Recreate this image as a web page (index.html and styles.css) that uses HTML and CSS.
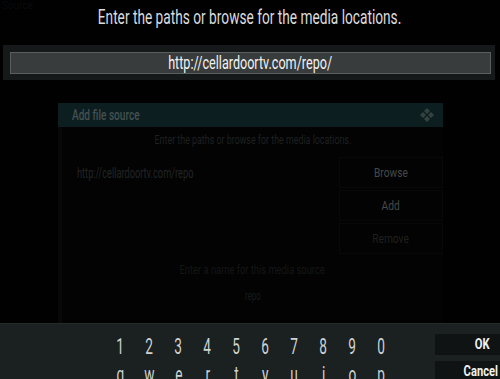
FILE: index.html
```html
<!DOCTYPE html>
<html>
<head>
<meta charset="utf-8">
<link rel="stylesheet" href="styles.css">
</head>
<body>
<div class="screen">
  <div class="ghost-tl">Source</div>
  <div class="title"><span class="nar">Enter the paths or browse for the media locations.</span></div>
  <div class="urlbar">
    <div class="urlfield"><span class="nar">http://cellardoortv.com/repo/</span></div>
  </div>
  <div class="dialog">
    <div class="dhead">
      <span class="dtitle nar-l">Add file source</span>
      <svg class="logo" width="16" height="16" viewBox="0 0 16 16">
        <path d="M8 1 L11 4 L8 7 L5 4 Z" fill="#34423f"/>
        <path d="M1 8 L4 5 L7 8 L4 11 Z" fill="#34423f"/>
        <path d="M9 8 L12 5 L15 8 L12 11 Z" fill="#34423f"/>
        <path d="M8 9 L11 12 L8 15 L5 12 Z" fill="#34423f"/>
      </svg>
    </div>
    <div class="dbody">
      <div class="dsub"><span class="nar">Enter the paths or browse for the media locations.</span></div>
      <div class="drow">
        <div class="dpath"><span class="nar-l">http://cellardoortv.com/repo</span></div>
        <div class="dbtns">
          <div class="dbtn"><span class="nar">Browse</span></div>
          <div class="dbtn"><span class="nar">Add</span></div>
          <div class="dbtn dim"><span class="nar">Remove</span></div>
        </div>
      </div>
      <div class="dname"><span class="nar">Enter a name for this media source</span></div>
      <div class="dval"><span class="nar">repo</span></div>
    </div>
  </div>
  <div class="keyboard">
    <div class="keys">
      <div class="krow">
        <div class="key"><span class="nar">1</span></div>
        <div class="key"><span class="nar">2</span></div>
        <div class="key"><span class="nar">3</span></div>
        <div class="key"><span class="nar">4</span></div>
        <div class="key"><span class="nar">5</span></div>
        <div class="key"><span class="nar">6</span></div>
        <div class="key"><span class="nar">7</span></div>
        <div class="key"><span class="nar">8</span></div>
        <div class="key"><span class="nar">9</span></div>
        <div class="key"><span class="nar">0</span></div>
      </div>
      <div class="krow">
        <div class="key"><span class="nar">q</span></div>
        <div class="key"><span class="nar">w</span></div>
        <div class="key"><span class="nar">e</span></div>
        <div class="key"><span class="nar">r</span></div>
        <div class="key"><span class="nar">t</span></div>
        <div class="key"><span class="nar">y</span></div>
        <div class="key"><span class="nar">u</span></div>
        <div class="key"><span class="nar">i</span></div>
        <div class="key"><span class="nar">o</span></div>
        <div class="key"><span class="nar">p</span></div>
      </div>
    </div>
    <div class="side">
      <div class="sbtn"><span class="nar-r">OK</span></div>
      <div class="sbtn"><span class="nar-r">Cancel</span></div>
    </div>
  </div>
</div>
</body>
</html>
```
FILE: styles.css
```css
html, body {
  margin: 0;
  padding: 0;
  background: #010101;
  overflow: hidden;
}
.screen {
  position: relative;
  width: 500px;
  height: 379px;
  overflow: hidden;
  font-family: Roboto, "Liberation Sans", sans-serif;
  background: #010101;
}
.nar, .nar-l, .nar-r {
  display: inline-block;
  white-space: nowrap;
  transform: scaleX(0.66);
}
.nar { transform-origin: center; }
.nar-l { transform-origin: left center; }
.nar-r { transform-origin: right center; }

.ghost-tl {
  position: absolute;
  left: 2px;
  top: 0;
  font-size: 10px;
  line-height: 11px;
  color: #0a0a0a;
}
.title {
  height: 45px;
  text-align: center;
  font-size: 20px;
  line-height: 34px;
  color: #dcdcdc;
}
.title .nar { transform: scaleX(0.685); }

.urlbar {
  height: 35px;
  margin: 0 5px 0 3px;
  padding: 7px 4px 0 7px;
  box-sizing: border-box;
  background: #161919;
}
.urlfield {
  height: 22px;
  box-sizing: border-box;
  background: #383c3c;
  border: 1px solid #5a5e5e;
  text-align: center;
  font-size: 18px;
  line-height: 20px;
  color: #f2f2f2;
}
.urlfield .nar { transform: scaleX(0.7); }

.dialog {
  margin: 23px 0 0 58px;
  width: 385px;
  height: 220px;
  display: flex;
  flex-direction: column;
}
.dhead {
  height: 24px;
  background: #0c1e20;
  display: flex;
  align-items: center;
  justify-content: space-between;
  padding: 0 8px 0 14px;
}
.dtitle {
  font-size: 14px;
  font-weight: 500;
  color: #455050;
  transform: scaleX(0.72);
}
.logo { display: block; }
.dbody {
  flex: 1;
  background: #030303;
  border-left: 4px solid #070808;
  display: flex;
  flex-direction: column;
}
.dsub {
  text-align: center;
  font-size: 12px;
  line-height: 14px;
  margin-top: 6px;
  color: #1e2121;
}
.dsub .nar { transform: scaleX(0.74); }
.drow {
  display: flex;
  margin-top: 10px;
}
.dpath {
  flex: 1;
  padding: 8px 0 0 15px;
  font-size: 14px;
  color: #222525;
}
.dpath .nar-l { transform: scaleX(0.66); }
.dbtns {
  width: 104px;
  display: flex;
  flex-direction: column;
  gap: 2px;
}
.dbtn {
  height: 31px;
  box-sizing: border-box;
  border: 1px solid #070808;
  background: #030303;
  text-align: center;
  line-height: 30px;
  font-size: 12px;
  color: #464a4a;
}
.dbtn.dim { color: #1e2020; }
.dbtn .nar { transform: scaleX(0.85); }
.dname {
  text-align: center;
  margin-top: 9px;
  font-size: 12px;
  line-height: 14px;
  color: #141616;
}
.dname .nar { transform: scaleX(0.78); }
.dval {
  text-align: center;
  margin-top: 12px;
  font-size: 12px;
  line-height: 14px;
  color: #181a1a;
}

.keyboard {
  height: 56px;
  background: #1b2020;
  border-top: 1px solid #262c2c;
  display: flex;
}
.keys {
  flex: 1;
  padding: 9px 0 0 106px;
}
.krow {
  display: flex;
  height: 28px;
}
.key {
  width: 29px;
  text-align: center;
  font-size: 22px;
  line-height: 28px;
  color: #cfd2d2;
}
.key .nar { transform: scaleX(0.62); }
.side {
  width: 65px;
  padding-top: 10px;
  display: flex;
  flex-direction: column;
  gap: 6px;
}
.sbtn {
  height: 21px;
  background: #0f1313;
  text-align: right;
  padding-right: 10px;
  font-size: 14px;
  font-weight: 700;
  line-height: 21px;
  color: #f0f0f0;
}
.sbtn .nar-r { transform: scaleX(0.8); }
.sbtn + .sbtn { padding-right: 2px; }
```
